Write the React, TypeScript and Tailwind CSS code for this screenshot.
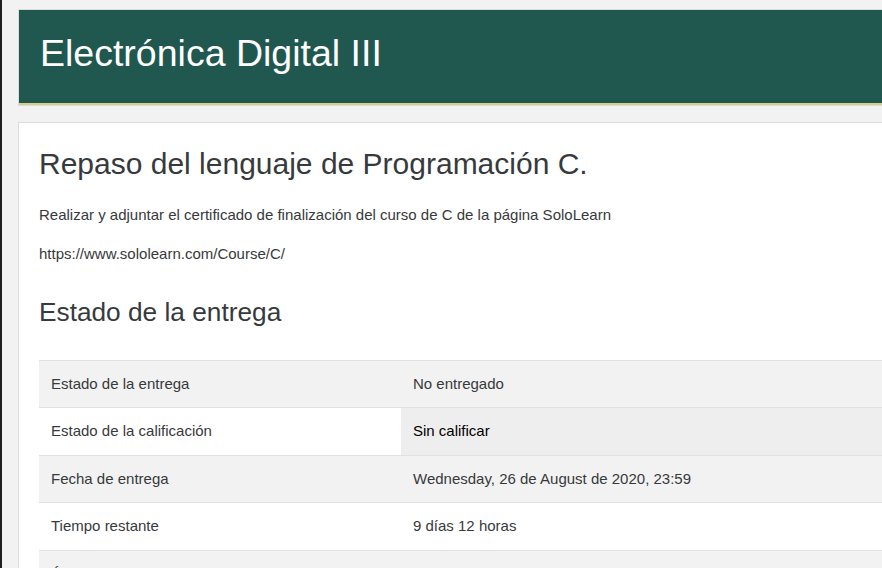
import React from 'react';

const ROWS: { label: string; value: string; highlight?: boolean }[] = [
  { label: 'Estado de la entrega', value: 'No entregado' },
  { label: 'Estado de la calificación', value: 'Sin calificar', highlight: true },
  { label: 'Fecha de entrega', value: 'Wednesday, 26 de August de 2020, 23:59' },
  { label: 'Tiempo restante', value: '9 días 12 horas' },
  { label: 'Última modificación', value: '-' },
  { label: 'Comentarios de la entrega', value: 'Comentarios (0)' },
];

export default function App() {
  return (
    <div
      className="h-[568px] w-full overflow-hidden bg-[#f2f2f2] text-[#373a3c] border-l-2 border-[#1f1f1f]"
      style={{ fontFamily: '"Liberation Sans", Arial, sans-serif' }}
    >
      <div className="w-[1100px] pl-4 pt-[9px]">
        {/* ====== Course header ====== */}
        <header className="border border-[#dcdcdc] bg-[#f2f2f2]">
          <div className="h-[95px] bg-[#20574f] border-b-2 border-[#dacd86] flex items-start px-[21px] pt-[25px]">
            <h1 className="text-[37.5px] leading-none text-white">Electrónica Digital III</h1>
          </div>
        </header>

        {/* ====== Assignment ====== */}
        <main className="mt-4 border border-[#dcdcdc] bg-white px-[20px] pt-[23px] pb-6">
          <h2 className="text-[30px] leading-[1.2] font-normal">Repaso del lenguaje de Programación C.</h2>
          <div className="mt-[22px] text-[15px] leading-[1.5]">
            <p>Realizar y adjuntar el certificado de finalización del curso de C de la página SoloLearn</p>
            <p className="mt-[16px]">https://www.sololearn.com/Course/C/</p>
          </div>

          <h3 className="mt-[32px] text-[26.25px] leading-[1.2] font-normal">Estado de la entrega</h3>

          <table className="mt-[31px] w-[843px] border-collapse text-[15px]">
            <tbody>
              {ROWS.map((row, i) => (
                <tr key={row.label} className={i % 2 === 0 ? 'bg-[#f2f2f2]' : 'bg-white'}>
                  <td className="h-[47.5px] w-[362px] border-t border-[#dee2e6] px-3 align-middle">{row.label}</td>
                  <td
                    className={`h-[47.5px] border-t border-[#dee2e6] px-3 align-middle ${
                      row.highlight ? 'bg-[#eeeeee] text-black' : ''
                    }`}
                  >
                    {row.value}
                  </td>
                </tr>
              ))}
            </tbody>
          </table>
        </main>
      </div>
    </div>
  );
}
